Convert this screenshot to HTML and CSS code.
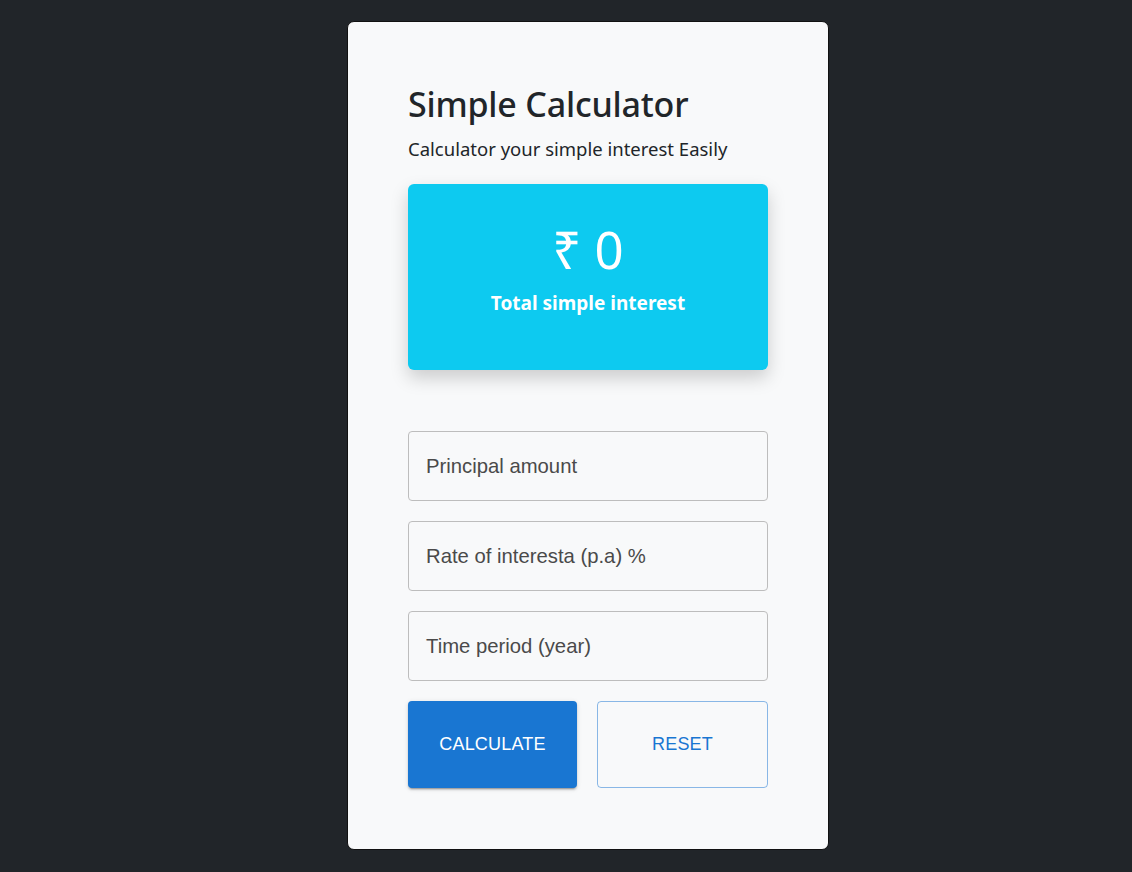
FILE: index.html
```html
<!DOCTYPE html>
<html lang="en">
<head>
<meta charset="utf-8">
<title>Simple Calculator</title>
<link rel="stylesheet" href="styles.css">
</head>
<body>
<div class="card">
  <h2 class="title">Simple Calculator</h2>
  <p class="subtitle">Calculator your simple interest Easily</p>
  <div class="result">
    <div class="amount">₹ 0</div>
    <div class="label">Total simple interest</div>
  </div>
  <form class="form">
    <div class="field"><span class="ph">Principal amount</span></div>
    <div class="field"><span class="ph">Rate of interesta (p.a) %</span></div>
    <div class="field"><span class="ph">Time period (year)</span></div>
    <div class="buttons">
      <button type="button" class="btn btn-contained">CALCULATE</button>
      <button type="button" class="btn btn-outlined">RESET</button>
    </div>
  </form>
</div>
</body>
</html>
```
FILE: styles.css
```css
html, body {
  margin: 0;
  padding: 0;
}
body {
  background: #212529;
  min-height: 872px;
  display: flex;
  justify-content: center;
  align-items: flex-start;
  padding-top: 21px;
  padding-left: 44px;
  box-sizing: border-box;
  font-family: "Noto Sans", "Open Sans", sans-serif;
}
.card {
  width: 482px;
  box-sizing: border-box;
  background: #f8f9fa;
  border: 1px solid #111;
  border-radius: 7px;
  padding: 60px 60px 61px 60px;
}
.title {
  margin: 0;
  font-size: 34px;
  font-weight: 500;
  line-height: 44px;
  color: #212529;
  letter-spacing: -0.2px;
}
.subtitle {
  margin: 10px 0 0 0;
  font-size: 18.5px;
  line-height: 26px;
  color: #212529;
}
.result {
  margin-top: 22px;
  height: 186px;
  background: #0dcaf0;
  border-radius: 6px;
  box-shadow: 0 8px 18px rgba(0, 0, 0, 0.18);
  color: #fff;
  display: flex;
  flex-direction: column;
  align-items: center;
  padding-top: 35px;
  box-sizing: border-box;
}
.amount {
  font-size: 51px;
  line-height: 60px;
  font-weight: 400;
}
.label {
  margin-top: 11px;
  font-size: 19px;
  font-weight: 700;
  line-height: 26px;
}
.form {
  margin-top: 61px;
  display: flex;
  flex-direction: column;
  gap: 20px;
}
.field {
  height: 70px;
  box-sizing: border-box;
  border: 1px solid #bdbdbd;
  border-radius: 4px;
  display: flex;
  align-items: center;
  padding-left: 17px;
}
.ph {
  font-family: "Liberation Sans", Arial, sans-serif;
  font-size: 20.3px;
  color: #4a4a4a;
}
.buttons {
  display: flex;
  gap: 20px;
}
.btn {
  flex: 1;
  height: 87px;
  border-radius: 4px;
  font-family: "Liberation Sans", Arial, sans-serif;
  font-size: 18px;
  letter-spacing: 0.2px;
  cursor: pointer;
}
.btn-contained {
  background: #1976d2;
  color: #fff;
  border: none;
  box-shadow: 0 3px 1px -2px rgba(0,0,0,0.2), 0 2px 2px 0 rgba(0,0,0,0.14), 0 1px 5px 0 rgba(0,0,0,0.12);
}
.btn-outlined {
  background: transparent;
  color: #1976d2;
  border: 1px solid rgba(25, 118, 210, 0.5);
}
```
